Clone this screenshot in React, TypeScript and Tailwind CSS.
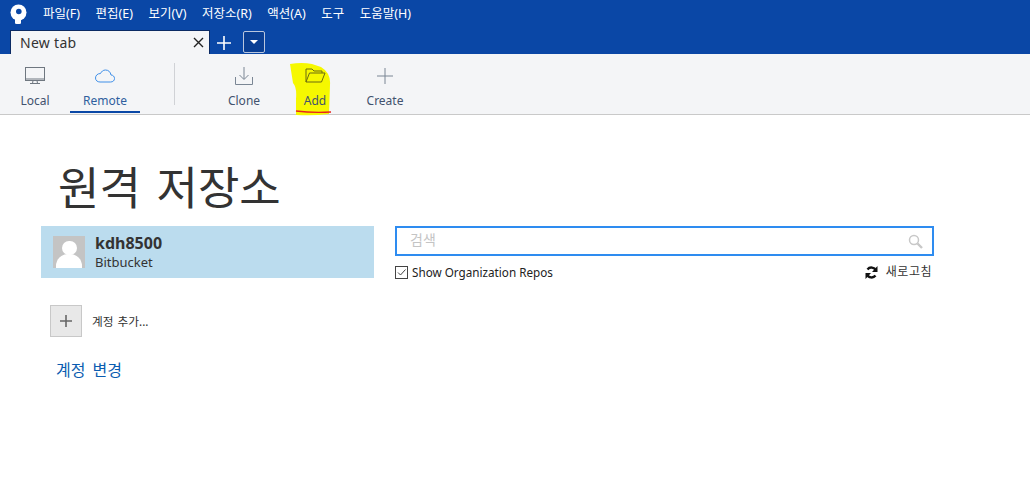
import React from 'react';

const menus = ['파일(F)', '편집(E)', '보기(V)', '저장소(R)', '액션(A)', '도구', '도움말(H)'];

function ToolItem({ label, active, className, children }: { label: string; active?: boolean; className: string; children: React.ReactNode }) {
    return (
        <div className={`relative flex flex-col items-center ${className}`}>
            <div className="h-[27px] flex items-center justify-center mt-[8px]">{children}</div>
            <span className={`relative text-[12px] leading-[16px] mt-[4px] ${active ? 'text-[#2f5f9e]' : 'text-[#42526e]'}`}>{label}</span>
            {active && <div className="absolute left-0 right-0 top-[57px] h-[2px] bg-[#0a47a6]" />}
        </div>
    );
}

export default function App() {
    return (
        <div className="w-[1030px] h-[502px] overflow-hidden bg-white text-[#333] font-['Noto_Sans','Noto_Sans_CJK_KR',sans-serif]">
            {/* Title bar */}
            <div className="h-[54px] bg-[#0a47a6]">
                <div className="h-[27px] flex items-center">
                    <svg className="ml-[10px] w-[17px] h-[20px]" viewBox="0 0 17 20">
                        <circle cx="8.5" cy="8.5" r="8" fill="#fff" />
                        <circle cx="8.8" cy="7.5" r="2.8" fill="#0a47a6" />
                        <path d="M5 14 L5 19.5 Q8 20.5 11 19.5 L11 14 Z" fill="#fff" />
                    </svg>
                    <div className="ml-[16px] flex gap-[15.5px] text-white text-[12.5px] leading-[16px]">
                        {menus.map((m) => (
                            <span key={m}>{m}</span>
                        ))}
                    </div>
                </div>
                <div className="h-[27px] flex items-end pl-[10px]">
                    <div className="w-[200px] h-[24px] bg-[#f4f5f7] border border-b-0 border-[#0b2a63] flex items-center justify-between pl-[9px] pr-[5px]">
                        <span className="text-[14px] tracking-[0.3px] text-[#333]">New tab</span>
                        <svg className="w-[11px] h-[11px]" viewBox="0 0 11 11" stroke="#222" strokeWidth="1.4">
                            <path d="M1 1 L10 10 M10 1 L1 10" />
                        </svg>
                    </div>
                    <svg className="ml-[7px] mb-[4px] w-[14px] h-[14px]" viewBox="0 0 14 14" stroke="#fff" strokeWidth="1.6">
                        <path d="M7 0 V14 M0 7 H14" />
                    </svg>
                    <div className="ml-[12px] mb-[1px] w-[22px] h-[22px] rounded-[2px] border border-[#b9c6dd] bg-[#0a3f94] flex items-center justify-center">
                        <div className="w-0 h-0 border-x-[4px] border-x-transparent border-t-[4px] border-t-white" />
                    </div>
                </div>
            </div>

            {/* Toolbar */}
            <div className="h-[61px] bg-[#f4f5f7] border-b border-[#c9c9c9] flex">
                <ToolItem label="Local" className="w-[70px]">
                    <svg className="w-[22px] h-[20px]" viewBox="0 0 22 20" fill="none" stroke="#6f7780" strokeWidth="1">
                        <rect x="1.5" y="1.5" width="19" height="13" />
                        <path d="M1.5 13 H20.5 M9 14.5 L8.5 17.5 M13 14.5 L13.5 17.5 M6 17.5 H16" />
                    </svg>
                </ToolItem>
                <ToolItem label="Remote" active className="w-[70px]">
                    <svg className="w-[20px] h-[14px]" viewBox="0 0 20 14" fill="none" stroke="#3f8fe8" strokeWidth="1">
                        <path d="M5 13 H15.5 C18 13 19.5 11.5 19.5 9.5 C19.5 7.5 18 6 16 6 C15.5 3 13.5 1 10.5 1 C8 1 6.5 2.5 5.5 4.5 C2.5 4.5 0.5 6.5 0.5 9 C0.5 11.5 2.5 13 5 13 Z" />
                    </svg>
                </ToolItem>
                <div className="ml-[34px] mt-[9px] w-px h-[42px] bg-[#d0d2d6]" />
                <ToolItem label="Clone" className="w-[70px] ml-[34px]">
                    <svg className="w-[20px] h-[20px]" viewBox="0 0 20 20" fill="none" stroke="#7a8694" strokeWidth="1">
                        <path d="M10 1 V13 M5.5 9 L10 13.5 L14.5 9 M1.5 11 V18.5 H18.5 V11" />
                    </svg>
                </ToolItem>
                <ToolItem label="Add" className="w-[70px] ml-[1px]">
                    {/* marker highlight and red underline drawn over the screenshot */}
                    <svg className="absolute left-[10px] top-[9px] w-[42px] h-[54px]" viewBox="0 0 42 54">
                        <path d="M0 1 Q12 -1 22 1 L31 4 Q41 10 40 22 L39 51 Q24 53 6 52 L6 36 Q7 24 3 20 Z" fill="#f6f800" />
                        <path d="M6 48 Q22 50 41 49" fill="none" stroke="#e8231c" strokeWidth="1.4" />
                    </svg>
                    <svg className="relative w-[21px] h-[15px]" viewBox="0 0 21 15" fill="none" stroke="#6b6b10" strokeWidth="1">
                        <path d="M1 14 V1 H7 L9 3 H17 V5 M1 14 L4.5 5 H20 L16.5 14 Z" />
                    </svg>
                </ToolItem>
                <ToolItem label="Create" className="w-[70px]">
                    <svg className="w-[16px] h-[16px]" viewBox="0 0 16 16" stroke="#7a8694" strokeWidth="1">
                        <path d="M8 0 V16 M0 8 H16" />
                    </svg>
                </ToolItem>
            </div>

            {/* Content */}
            <div className="pt-[42px]">
                <h1 className="ml-[58px] text-[45px] leading-[62px] [word-spacing:4px] text-[#333] font-normal">원격 저장소</h1>
                <div className="mt-[7px] flex items-start pl-[41px]">
                    <div className="w-[333px]">
                        <div className="h-[52px] bg-[#bbdcee] flex items-center pl-[12px]">
                            <div className="w-[32px] h-[32px] bg-[#c4c4c4] overflow-hidden flex flex-col items-center">
                                <div className="mt-[5px] w-[15px] h-[15px] rounded-full bg-white" />
                                <div className="-mt-[1px] w-[26px] h-[16px] rounded-t-[12px] bg-white" />
                            </div>
                            <div className="ml-[10px]">
                                <div className="text-[16px] leading-[20px] font-bold">kdh8500</div>
                                <div className="text-[13px] leading-[18px]">Bitbucket</div>
                            </div>
                        </div>
                        <div className="mt-[27px] ml-[9px] flex items-center">
                            <div className="w-[32px] h-[32px] bg-[#e8e8e8] border border-[#c8c8c8] flex items-center justify-center">
                                <svg className="w-[12px] h-[12px]" viewBox="0 0 12 12" stroke="#666" strokeWidth="1.6">
                                    <path d="M6 0 V12 M0 6 H12" />
                                </svg>
                            </div>
                            <span className="ml-[10px] mt-[2px] text-[11.7px] [word-spacing:1px]">계정 추가...</span>
                        </div>
                        <div className="mt-[22px] ml-[15px] text-[16px] leading-[22px] [word-spacing:3px] text-[#0a5cb0]">계정 변경</div>
                    </div>
                    <div className="ml-[21px] w-[539px]">
                        <div className="h-[30px] border-[2px] border-[#2e8cf0] flex items-center justify-between pl-[13px] pr-[9px]">
                            <span className="text-[14px] leading-[18px] -mt-[2px] text-[#c4c4c4]">검색</span>
                            <svg className="w-[15px] h-[15px]" viewBox="0 0 15 15" fill="none" stroke="#c8c8c8">
                                <circle cx="6" cy="6" r="4.5" strokeWidth="1.5" />
                                <path d="M9.5 9.5 L14 14" strokeWidth="2.4" />
                            </svg>
                        </div>
                        <div className="mt-[8px] flex items-center justify-between">
                            <div className="flex items-center">
                                <div className="w-[13px] h-[13px] border border-[#444] flex items-center justify-center">
                                    <svg className="w-[11px] h-[11px]" viewBox="0 0 11 11" fill="none" stroke="#444" strokeWidth="1">
                                        <path d="M2 5.5 L4.5 8 L9.5 2.5" />
                                    </svg>
                                </div>
                                <span className="ml-[4px] -mt-[1px] text-[11.7px] leading-[16px] text-[#222]">Show Organization Repos</span>
                            </div>
                            <div className="flex items-center pr-[2px]">
                                <svg className="w-[13px] h-[13px]" viewBox="0 0 13 13" fill="none" stroke="#111" strokeWidth="2.4">
                                    <path d="M11 4.5 A5 5 0 0 0 2.5 3.5 M2 8.5 A5 5 0 0 0 10.5 9.5" />
                                    <path d="M12.5 0 V6 H7 Z M0.5 13 V7 H6 Z" fill="#111" stroke="none" />
                                </svg>
                                <span className="ml-[8px] text-[12px] tracking-[0.5px] leading-[16px]">새로고침</span>
                            </div>
                        </div>
                    </div>
                </div>
            </div>
        </div>
    );
}
